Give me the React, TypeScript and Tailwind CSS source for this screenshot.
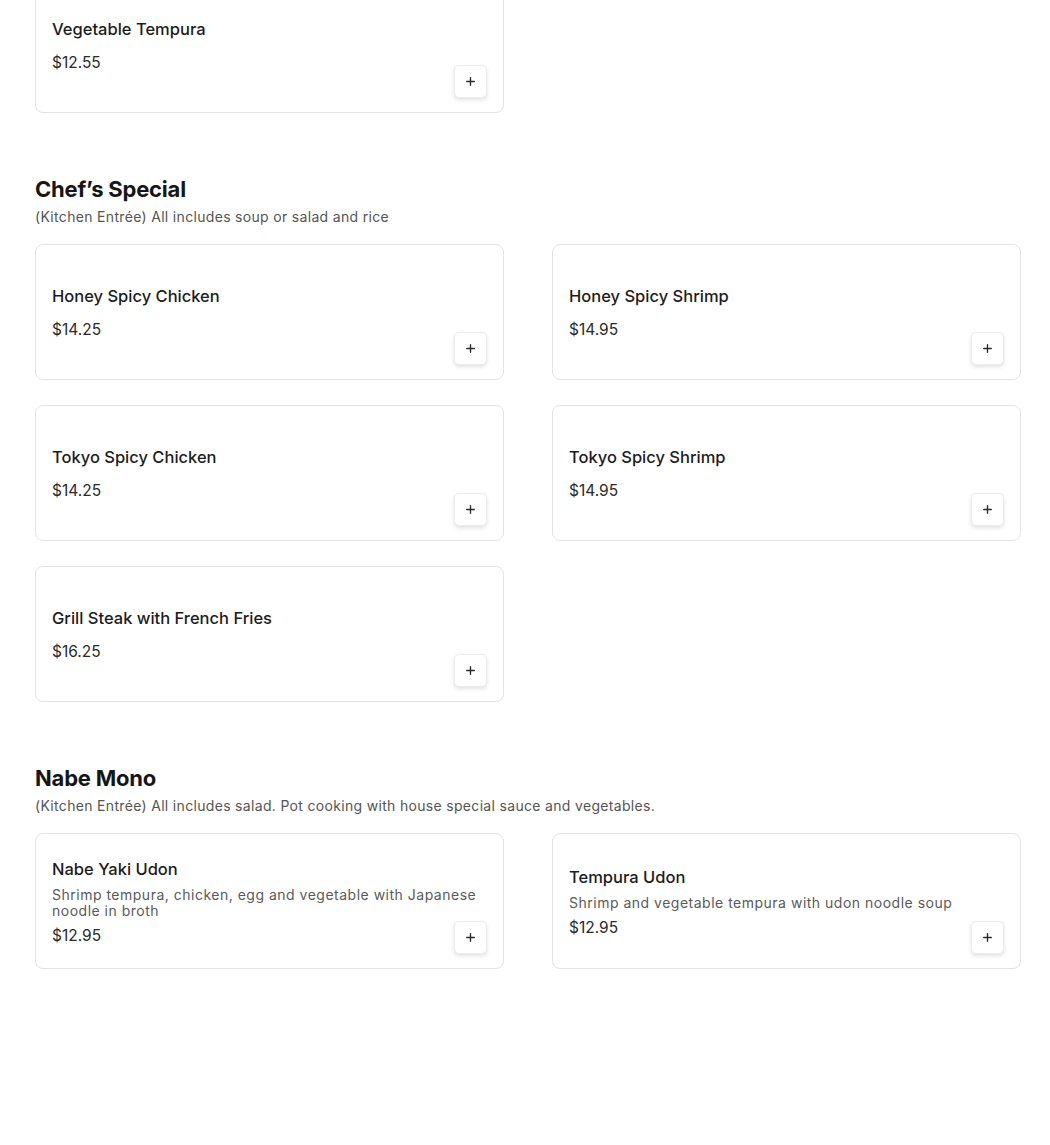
import { Plus } from "lucide-react";

type Item = { name: string; price: string; desc?: string };
type Section = { title?: string; note?: string; items: Item[] };

const sections: Section[] = [
  { items: [{ name: "Vegetable Tempura", price: "$12.55" }] },
  {
    title: "Chef’s Special",
    note: "(Kitchen Entrée) All includes soup or salad and rice",
    items: [
      { name: "Honey Spicy Chicken", price: "$14.25" },
      { name: "Honey Spicy Shrimp", price: "$14.95" },
      { name: "Tokyo Spicy Chicken", price: "$14.25" },
      { name: "Tokyo Spicy Shrimp", price: "$14.95" },
      { name: "Grill Steak with French Fries", price: "$16.25" },
    ],
  },
  {
    title: "Nabe Mono",
    note: "(Kitchen Entrée) All includes salad. Pot cooking with house special sauce and vegetables.",
    items: [
      {
        name: "Nabe Yaki Udon",
        price: "$12.95",
        desc: "Shrimp tempura, chicken, egg and vegetable with Japanese noodle in broth",
      },
      {
        name: "Tempura Udon",
        price: "$12.95",
        desc: "Shrimp and vegetable tempura with udon noodle soup",
      },
    ],
  },
];

const MenuCard = ({ item }: { item: Item }) => (
  <div className="relative flex h-[136px] flex-col justify-center rounded-[8px] border border-[#e3e3e3] bg-white px-[16px] pt-[2px]">
    <div
      className={`text-[16.5px] font-medium leading-[24px] text-[#1c1c1c] ${item.desc ? "mb-[6px]" : "mb-[10px]"}`}
    >
      {item.name}
    </div>
    {item.desc && (
      <div className="mb-[5px] text-[14px] leading-[16px] tracking-[0.5px] text-[#5a5a5a]">{item.desc}</div>
    )}
    <div className="text-[15.5px] leading-[24px] text-[#2a2a2a]">{item.price}</div>
    <button className="absolute bottom-[14px] right-[16px] flex h-[33px] w-[33px] items-center justify-center rounded-[5px] border border-[#ececec] bg-white text-[#2a2a2a] shadow-[0_2px_4px_rgba(0,0,0,0.12)]">
      <Plus size={13} strokeWidth={2.5} />
    </button>
  </div>
);

export default function App() {
  return (
    <div
      className="min-h-[1145px] bg-white pb-[40px] pl-[35px] pr-[29px]"
      style={{ fontFamily: "Inter, 'Noto Sans', sans-serif" }}
    >
      {sections.map((section, i) => (
        <section key={i} className={i === 0 ? "-mt-[23px]" : "mt-[60px]"}>
          {section.title && (
            <div className="mb-[17px]">
              <h2 className="text-[22px] font-bold leading-[32px] tracking-[-0.2px] text-[#161616]">
                {section.title}
              </h2>
              <p className="mt-[2px] text-[14px] leading-[20px] tracking-[0.32px] text-[#555]">
                {section.note}
              </p>
            </div>
          )}
          <div className="grid grid-cols-2 gap-x-[48px] gap-y-[25px]">
            {section.items.map((item) => (
              <MenuCard key={item.name} item={item} />
            ))}
          </div>
        </section>
      ))}
    </div>
  );
}
